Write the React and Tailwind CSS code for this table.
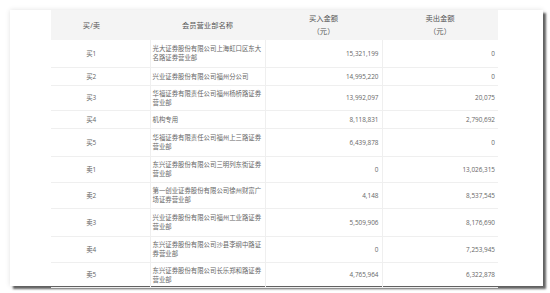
const rows = [
  { side: '买1', name: ['光大证券股份有限公司上海虹口区东大', '名路证券营业部'], buy: '15,321,199', sell: '0', h: 'h-[27px]' },
  { side: '买2', name: ['兴业证券股份有限公司福州分公司'], buy: '14,995,220', sell: '0', h: 'h-[18px]' },
  { side: '买3', name: ['华福证券有限责任公司福州杨桥路证券', '营业部'], buy: '13,992,097', sell: '20,075', h: 'h-[25px]' },
  { side: '买4', name: ['机构专用'], buy: '8,118,831', sell: '2,790,692', h: 'h-[18px]' },
  { side: '买5', name: ['华福证券有限责任公司福州上三路证券', '营业部'], buy: '6,439,878', sell: '0', h: 'h-[28px]' },
  { side: '卖1', name: ['东兴证券股份有限公司三明列东街证券', '营业部'], buy: '0', sell: '13,026,315', h: 'h-[26px]' },
  { side: '卖2', name: ['第一创业证券股份有限公司徐州财富广', '场证券营业部'], buy: '4,148', sell: '8,537,545', h: 'h-[26px]' },
  { side: '卖3', name: ['兴业证券股份有限公司福州工业路证券', '营业部'], buy: '5,509,906', sell: '8,176,690', h: 'h-[28px]' },
  { side: '卖4', name: ['东兴证券股份有限公司沙县李纲中路证', '券营业部'], buy: '0', sell: '7,253,945', h: 'h-[26px]' },
  { side: '卖5', name: ['东兴证券股份有限公司长乐郑和路证券', '营业部'], buy: '4,765,964', sell: '6,322,878', h: 'h-[25px]' },
];

export default function App() {
  return (
    <div className="w-[550px] h-[293px] bg-white p-[10px] font-['Open_Sans','Noto_Sans_CJK_SC',sans-serif] text-[#666]">
      <div className="w-[533px] h-[276px] bg-white pl-[41px] shadow-[3px_3px_2px_rgba(0,0,0,0.6),0_0_5px_rgba(0,0,0,0.12)]">
        <table className="w-[447px] table-fixed border-collapse">
          <colgroup>
            <col className="w-[99px]" />
            <col className="w-[115px]" />
            <col className="w-[117px]" />
            <col className="w-[116px]" />
          </colgroup>
          <thead>
            <tr className="h-[30px] bg-[#f4f4f4] text-[7.3px] leading-[13px] text-[#555]">
              <th className="font-normal text-center pr-[18px]">买/卖</th>
              <th className="font-normal text-center">会员营业部名称</th>
              <th className="font-normal text-center">
                买入金额
                <br />
                （元）
              </th>
              <th className="font-normal text-center">
                卖出金额
                <br />
                （元）
              </th>
            </tr>
          </thead>
          <tbody className="text-[6.4px] leading-[9px]">
            {rows.map((r) => (
              <tr key={r.side} className={`${r.h} border-b border-[#efefef]`}>
                <td className="text-center pr-[18px] border-r border-[#efefef]">{r.side}</td>
                <td className="pl-[2px] pr-[1px] border-r border-[#efefef]">
                  {r.name.map((line) => (
                    <div key={line} className="whitespace-nowrap">{line}</div>
                  ))}
                </td>
                <td className="text-right pr-[3px] border-r border-[#efefef]">{r.buy}</td>
                <td className="text-right pr-[3px]">{r.sell}</td>
              </tr>
            ))}
          </tbody>
        </table>
      </div>
    </div>
  );
}
